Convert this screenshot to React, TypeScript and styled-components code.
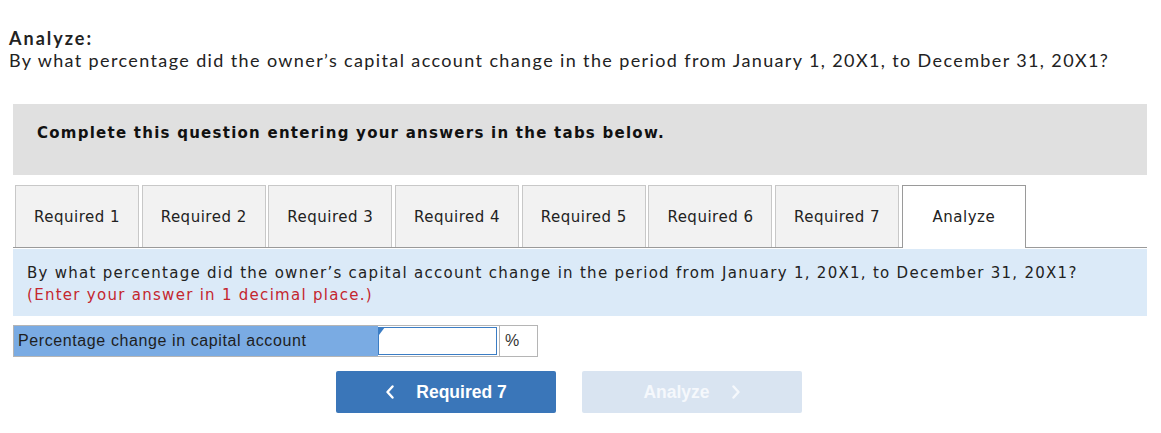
import React from 'react'
import styled, { createGlobalStyle } from 'styled-components'

const GlobalStyle = createGlobalStyle`
  body {
    margin: 0;
    background: #fff;
  }
`

const tabs = ['Required 1', 'Required 2', 'Required 3', 'Required 4', 'Required 5', 'Required 6', 'Required 7', 'Analyze']

const question =
  'By what percentage did the owner’s capital account change in the period from January 1, 20X1, to December 31, 20X1?'

const App: React.FC = () => {
  return (
    <StyledPage>
      <GlobalStyle />
      <StyledHeader>
        <StyledTitle>Analyze:</StyledTitle>
        <StyledLead>{question}</StyledLead>
      </StyledHeader>

      <StyledBody>
        <StyledNotice>Complete this question entering your answers in the tabs below.</StyledNotice>

        <StyledTabs>
          {tabs.map((t) => (
            <StyledTab key={t} $active={t === 'Analyze'}>
              {t}
            </StyledTab>
          ))}
        </StyledTabs>

        <StyledPanel>
          <StyledPanelText>{question}</StyledPanelText>
          <StyledHint>(Enter your answer in 1 decimal place.)</StyledHint>
        </StyledPanel>

        <StyledRow>
          <StyledLabel>Percentage change in capital account</StyledLabel>
          <StyledInputCell>
            <StyledInput />
          </StyledInputCell>
          <StyledUnit>%</StyledUnit>
        </StyledRow>

        <StyledNav>
          <StyledNavButton>
            <Chevron dir="left" />
            <span>Required 7</span>
          </StyledNavButton>
          <StyledNavButton $disabled>
            <span>Analyze</span>
            <Chevron dir="right" />
          </StyledNavButton>
        </StyledNav>
      </StyledBody>
    </StyledPage>
  )
}

const Chevron: React.FC<{ dir: 'left' | 'right' }> = ({ dir }) => (
  <svg width="10" height="14" viewBox="0 0 10 14">
    <path
      d={dir === 'left' ? 'M7.5 1.5 L2.5 7 L7.5 12.5' : 'M2.5 1.5 L7.5 7 L2.5 12.5'}
      fill="none"
      stroke="currentColor"
      strokeWidth="2.4"
      strokeLinecap="round"
      strokeLinejoin="round"
    />
  </svg>
)

const StyledPage = styled.div`
  width: 1161px;
  padding-top: 27px;
`

const StyledHeader = styled.div`
  padding-left: 9px;
  font-family: Lato, 'Open Sans', sans-serif;
  color: #222;
`

const StyledTitle = styled.div`
  font-size: 18px;
  font-weight: 700;
  line-height: 22px;
  letter-spacing: 2px;
`

const StyledLead = styled.div`
  font-size: 18px;
  line-height: 23px;
  letter-spacing: 1.38px;
`

const StyledBody = styled.div`
  margin: 32px 14px 0 13px;
  font-family: 'DejaVu Sans', Verdana, sans-serif;
`

const StyledNotice = styled.div`
  background: #e0e0e0;
  height: 71px;
  box-sizing: border-box;
  padding: 20px 24px 0;
  font-size: 15px;
  font-weight: 700;
  letter-spacing: 1.25px;
  color: #111;
`

const StyledTabs = styled.div`
  display: flex;
  gap: 2.7px;
  margin-top: 10px;
  padding-left: 2px;
  border-bottom: 1px solid #9a9a9a;
`

const StyledTab = styled.div<{ $active?: boolean }>`
  width: 124px;
  height: 62px;
  box-sizing: border-box;
  display: flex;
  align-items: center;
  justify-content: center;
  border: 1px solid #c8c8c8;
  border-bottom: none;
  background: ${(p) => (p.$active ? '#fff' : '#f2f2f2')};
  font-size: 15px;
  letter-spacing: 0.5px;
  color: #222;
  ${(p) =>
    p.$active &&
    `
    border-color: #9a9a9a;
    margin-bottom: -1px;
    height: 63px;
  `}
`

const StyledPanel = styled.div`
  margin-top: 1px;
  background: #dbeaf8;
  height: 67px;
  box-sizing: border-box;
  padding: 13px 14px 0;
  font-size: 15px;
  line-height: 22px;
  letter-spacing: 1.28px;
`

const StyledPanelText = styled.div`
  color: #222;
`

const StyledHint = styled.div`
  color: #c4262e;
`

const StyledRow = styled.div`
  display: flex;
  margin-top: 9px;
  height: 32px;
  width: 525px;
  box-sizing: border-box;
  border-top: 1px solid #b5b5b5;
  border-bottom: 1px solid #b5b5b5;
  border-left: 1px solid #b5b5b5;
  font-family: 'Liberation Sans', Arial, sans-serif;
  font-size: 16px;
  letter-spacing: 0.6px;
`

const StyledLabel = styled.div`
  width: 364px;
  background: #7aabe3;
  color: #1e1e1e;
  display: flex;
  align-items: center;
  padding-left: 4px;
  box-sizing: border-box;
`

const StyledInputCell = styled.div`
  width: 122px;
  position: relative;
  background: #fff;
  padding: 1px 2px 1px 0;
  box-sizing: border-box;
  border-right: 1px solid #b5b5b5;
  &::before {
    content: '';
    position: absolute;
    left: 1px;
    top: 1px;
    border-top: 8px solid #3c7dc4;
    border-right: 6px solid transparent;
  }
`

const StyledInput = styled.div`
  height: 100%;
  box-sizing: border-box;
  border: 1px solid #3c7dc4;
`

const StyledUnit = styled.div`
  width: 38px;
  display: flex;
  align-items: center;
  padding-left: 5px;
  box-sizing: border-box;
  border-right: 1px solid #b5b5b5;
  color: #333;
`

const StyledNav = styled.div`
  display: flex;
  gap: 26px;
  margin-top: 14px;
  padding-left: 323px;
`

const StyledNavButton = styled.div<{ $disabled?: boolean }>`
  width: 220px;
  height: 42px;
  border-radius: 2px;
  display: flex;
  align-items: center;
  justify-content: center;
  gap: 21px;
  background: ${(p) => (p.$disabled ? '#d9e4f1' : '#3a76b9')};
  color: ${(p) => (p.$disabled ? '#f5f8fc' : '#fff')};
  font-family: 'Liberation Sans', Arial, sans-serif;
  font-size: 17.5px;
  font-weight: 700;
`

export default App
